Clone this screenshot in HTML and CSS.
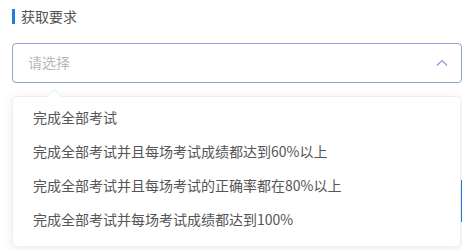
FILE: index.html
```html
<!DOCTYPE html>
<html>
<head>
    <title>获取要求</title>
    <meta name="viewport" content="width=device-width, initial-scale=1.0">
    <link rel="stylesheet" href="styles.css">
</head>
<body>
    <div class="form-item">
        <div class="section-title">获取要求</div>
        <div class="select-wrap">
            <div class="select-box">
                <span class="placeholder">请选择</span>
                <svg class="arrow" width="12" height="8" viewBox="0 0 12 8">
                    <path d="M1 6.5 L6 1.5 L11 6.5" fill="none" stroke="#8c9ad8" stroke-width="1.2"/>
                </svg>
            </div>
            <div class="dropdown">
                <span class="caret"></span>
                <ul class="options">
                    <li>完成全部考试</li>
                    <li>完成全部考试并且每场考试成绩都达到60%以上</li>
                    <li>完成全部考试并且每场考试的正确率都在80%以上</li>
                    <li>完成全部考试并每场考试成绩都达到100%</li>
                </ul>
            </div>
        </div>
        <div class="next-row">
            <div class="side-btn"></div>
        </div>
    </div>
</body>
</html>
```

FILE: styles.css
```css
html, body {
    height: 250px;
}
body {
    margin: 0;
    background-color: #ffffff;
    font-family: "Noto Sans CJK SC", "Liberation Sans", sans-serif;
    overflow: hidden;
}
.form-item {
    padding: 9px 0 0 12px;
}
.section-title {
    border-left: 3px solid #1f7de6;
    padding-left: 6px;
    height: 15px;
    line-height: 15px;
    font-size: 14px;
    color: #555555;
}
.select-wrap {
    position: relative;
    margin-top: 19px;
}
.select-box {
    height: 38px;
    border: 1px solid #8fa3d6;
    border-radius: 4px;
    display: flex;
    align-items: center;
    justify-content: space-between;
    padding: 0 13px 0 15px;
    width: 420px;
}
.placeholder {
    font-size: 14px;
    color: #b8b8b8;
    margin-top: -2px;
}
.arrow {
    display: block;
}
.dropdown {
    position: absolute;
    top: 53px;
    left: 0;
    width: 447px;
    background-color: #ffffff;
    border: 1px solid #eceef3;
    border-radius: 4px;
    box-shadow: 0 2px 12px rgba(0, 0, 0, 0.08);
    z-index: 2;
}
.caret {
    position: absolute;
    top: -6px;
    left: 36px;
    width: 10px;
    height: 10px;
    background-color: #ffffff;
    border-top: 1px solid #eceef3;
    border-left: 1px solid #eceef3;
    transform: rotate(45deg);
}
.options {
    list-style: none;
    margin: 0;
    padding: 3px 0 10px;
}
.options li {
    height: 34px;
    line-height: 34px;
    padding-left: 20px;
    font-size: 14px;
    color: #555555;
}
.next-row {
    display: flex;
    justify-content: flex-end;
    margin-top: 97px;
}
.side-btn {
    width: 2px;
    height: 42px;
    background-color: #1f7de6;
}
```
